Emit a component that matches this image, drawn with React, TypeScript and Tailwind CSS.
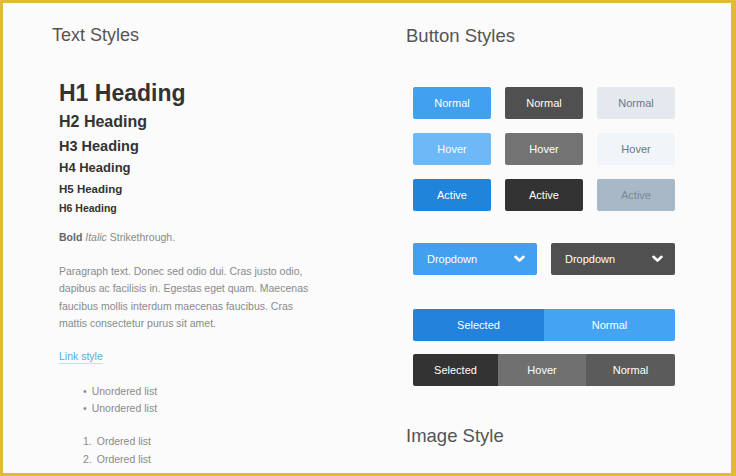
import React from "react";

const Chevron = () => (
  <svg width="11" height="8" viewBox="0 0 11 8" fill="none">
    <path d="M1.5 1.8 L5.5 5.6 L9.5 1.8" stroke="#ffffff" strokeWidth="2.6" strokeLinecap="round" strokeLinejoin="round" />
  </svg>
);

const buttons = [
  { label: "Normal", cls: "bg-[#42a0f0] text-white" },
  { label: "Normal", cls: "bg-[#505050] text-white" },
  { label: "Normal", cls: "bg-[#e3e9ef] text-[#6c7783]" },
  { label: "Hover", cls: "bg-[#6db8f6] text-white" },
  { label: "Hover", cls: "bg-[#737373] text-white" },
  { label: "Hover", cls: "bg-[#f1f4f8] text-[#6c7783]" },
  { label: "Active", cls: "bg-[#2084da] text-white" },
  { label: "Active", cls: "bg-[#333333] text-white" },
  { label: "Active", cls: "bg-[#a9b8c6] text-[#7b8897]" },
];

export default function App() {
  return (
    <div className="w-[736px] h-[476px] border-t-[3px] border-l-[3px] border-r-[5px] border-b-[3px] border-[#e0bb3a] bg-[#fbfbfb] flex font-['Liberation_Sans',Arial,sans-serif] overflow-hidden">
      {/* ── Text styles ── */}
      <div className="w-[403px] pl-[49px] flex flex-col">
        <h2 className="mt-[20px] text-[18px] leading-[24px] text-[#555]">Text Styles</h2>
        <div className="pl-[7px] flex flex-col text-[#333] font-bold">
          <p className="mt-[32px] text-[23px] leading-[28px]">H1 Heading</p>
          <p className="mt-[5px] text-[16px] leading-[20px]">H2 Heading</p>
          <p className="mt-[4px] text-[14.5px] leading-[20px]">H3 Heading</p>
          <p className="mt-[3px] text-[13px] leading-[18px]">H4 Heading</p>
          <p className="mt-[4px] text-[11.5px] leading-[16px]">H5 Heading</p>
          <p className="mt-[3px] text-[10.5px] leading-[16px]">H6 Heading</p>
        </div>
        <div className="pl-[7px] flex flex-col text-[10.5px] text-[#8a8a8a]">
          <p className="mt-[14px] leading-[14px]">
            <span className="font-bold text-[#666]">Bold</span> <em>Italic</em> Strikethrough.
          </p>
          <p className="mt-[19px] leading-[17.3px]">
            Paragraph text. Donec sed odio dui. Cras justo odio,<br />
            dapibus ac facilisis in. Egestas eget quam. Maecenas<br />
            faucibus mollis interdum maecenas faucibus. Cras<br />
            mattis consectetur purus sit amet.
          </p>
          <p className="mt-[17px] leading-[14px]">
            <span className="text-[#55acdf] underline decoration-[#bfe0f3] underline-offset-[3px]">Link style</span>
          </p>
          <ul className="mt-[20px] pl-[24px] leading-[17px]">
            {["Unordered list", "Unordered list"].map((t, i) => (
              <li key={i} className="flex gap-[5px]"><span>•</span><span>{t}</span></li>
            ))}
          </ul>
          <ol className="mt-[16px] pl-[24px] leading-[17.5px]">
            {["Ordered list", "Ordered list"].map((t, i) => (
              <li key={i} className="flex gap-[5px]"><span>{i + 1}.</span><span>{t}</span></li>
            ))}
          </ol>
        </div>
      </div>

      {/* ── Button styles ── */}
      <div className="flex-1 flex flex-col">
        <h2 className="mt-[21px] text-[18.5px] leading-[24px] text-[#555]">Button Styles</h2>
        <div className="pl-[7px] flex flex-col text-[11px]">
          <div className="mt-[39px] grid grid-cols-[78px_78px_78px] auto-rows-[32px] gap-[14px]">
            {buttons.map((b, i) => (
              <div key={i} className={`rounded-[2px] flex items-center justify-center ${b.cls}`}>{b.label}</div>
            ))}
          </div>

          <div className="mt-[32px] flex gap-[14px]">
            <div className="w-[124px] h-[32px] rounded-[2px] bg-[#42a0f0] text-white flex items-center justify-between pl-[14px] pr-[12px]">
              <span>Dropdown</span><Chevron />
            </div>
            <div className="w-[124px] h-[32px] rounded-[2px] bg-[#505050] text-white flex items-center justify-between pl-[14px] pr-[12px]">
              <span>Dropdown</span><Chevron />
            </div>
          </div>

          <div className="mt-[34px] w-[262px] h-[32px] flex rounded-[2px] overflow-hidden text-white">
            <div className="w-[131px] bg-[#2282dc] flex items-center justify-center">Selected</div>
            <div className="flex-1 bg-[#45a3f3] flex items-center justify-center">Normal</div>
          </div>

          <div className="mt-[13px] w-[262px] h-[32px] flex rounded-[2px] overflow-hidden text-white">
            <div className="w-[85px] bg-[#333333] flex items-center justify-center">Selected</div>
            <div className="w-[88px] bg-[#707070] flex items-center justify-center">Hover</div>
            <div className="flex-1 bg-[#5b5b5b] flex items-center justify-center">Normal</div>
          </div>
        </div>
        <h2 className="mt-[38px] text-[18.5px] leading-[24px] text-[#555]">Image Style</h2>
      </div>
    </div>
  );
}
